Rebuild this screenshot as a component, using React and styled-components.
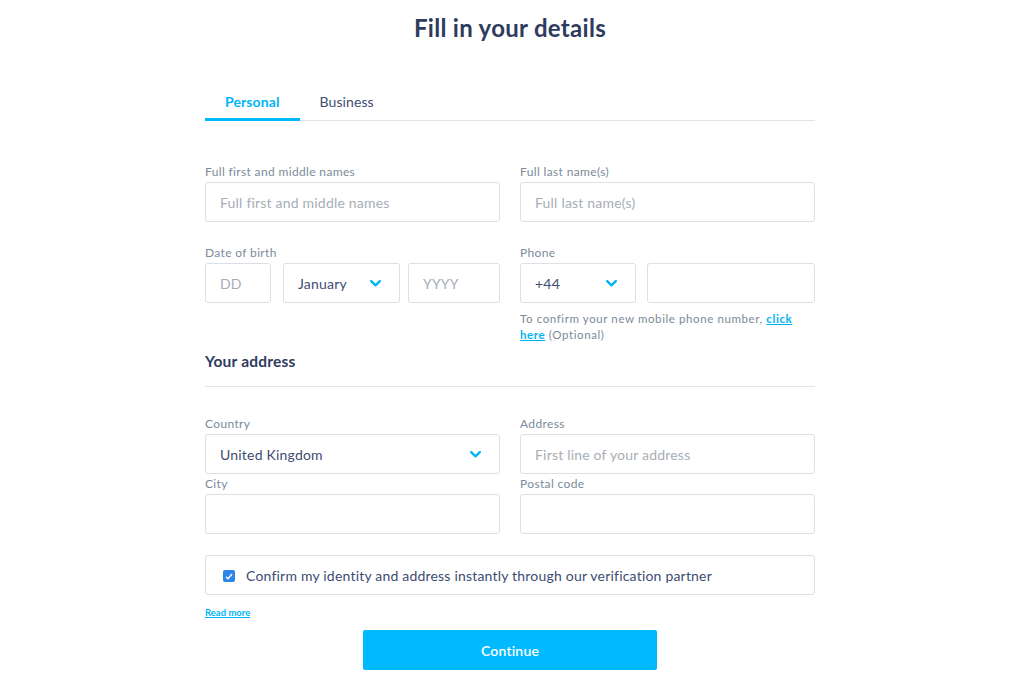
import React from 'react';
import styled, { createGlobalStyle } from 'styled-components';

const GlobalStyle = createGlobalStyle`
    body {
        margin: 0;
        background: #ffffff;
        font-family: Lato, "Open Sans", sans-serif;
        color: #2e3b5e;
    }
    * { box-sizing: border-box; }
`;

const Page = styled.div`
    padding: 14px 4px 0 0;
`;

const Content = styled.div`
    width: 610px;
    margin: 0 auto;
`;

const Title = styled.h1`
    margin: 0;
    font-size: 24px;
    line-height: 28px;
    font-weight: 700;
    letter-spacing: 0.3px;
    text-align: center;
    color: #2e3b5e;
`;

const Tabs = styled.div`
    display: flex;
    margin-top: 46px;
    border-bottom: 1px solid #e2e4e7;
`;

const Tab = styled.div`
    padding: 0 20px 2px;
    line-height: 28px;
    font-size: 14px;
    letter-spacing: 0.1px;
    font-weight: ${p => (p.$active ? 700 : 400)};
    color: ${p => (p.$active ? '#00b4f5' : '#3d4c72')};
    border-bottom: 3px solid ${p => (p.$active ? '#00b9ff' : 'transparent')};
    margin-bottom: -1px;
    cursor: pointer;
`;

const Grid = styled.div`
    display: grid;
    grid-template-columns: 1fr 1fr;
    column-gap: 20px;
    row-gap: ${p => p.$rowGap || 23}px;
    margin-top: ${p => p.$top || 0}px;
`;

const Field = styled.div`
    display: flex;
    flex-direction: column;
`;

const Label = styled.label`
    font-size: 12px;
    line-height: 15px;
    letter-spacing: 0.35px;
    color: #7b8b98;
    margin-bottom: 3px;
`;

const Box = styled.div`
    height: 40px;
    flex: ${p => (p.$grow ? '1' : 'none')};
    width: ${p => (p.$w ? `${p.$w}px` : 'auto')};
    margin-left: ${p => p.$ml || 0}px;
    border: 1px solid #dcdfe3;
    border-radius: 3px;
    display: flex;
    align-items: center;
    justify-content: space-between;
    padding: 0 18px 0 14px;
    font-size: 14px;
    letter-spacing: 0.2px;
    color: ${p => (p.$placeholder ? '#a7aeb6' : '#3d4c72')};
    background: #fff;
`;

const InlineRow = styled.div`
    display: flex;
    gap: ${p => p.$gap || 0}px;
`;

const Note = styled.p`
    margin: 8px 0 0;
    font-size: 11.5px;
    line-height: 16px;
    color: #7b8b98;
    letter-spacing: 0.6px;
`;

const Link = styled.a`
    color: #00b4f5;
    font-weight: 700;
    text-decoration: underline;
    font-size: ${p => p.$size || 11.5}px;
`;

const Section = styled.h2`
    margin: 8px 0 0;
    padding-bottom: 15px;
    font-size: 15.5px;
    line-height: 20px;
    font-weight: 700;
    letter-spacing: 0.2px;
    color: #2e3b5e;
    border-bottom: 1px solid #e2e4e7;
`;

const CheckRow = styled.div`
    margin-top: 21px;
    height: 40px;
    border: 1px solid #dcdfe3;
    border-radius: 3px;
    display: flex;
    align-items: center;
    padding-left: 17px;
    gap: 11px;
    font-size: 14px;
    letter-spacing: 0.2px;
    color: #3d4c72;
`;

const CheckBox = styled.span`
    width: 12px;
    height: 12px;
    border-radius: 2px;
    background: #2b86e8;
    display: inline-flex;
    align-items: center;
    justify-content: center;
    margin-top: 2px;
`;

const ReadMore = styled.div`
    margin-top: 9px;
    line-height: 12px;
`;

const Button = styled.button`
    display: block;
    width: 294px;
    height: 40px;
    margin: 11px auto 0;
    border: none;
    border-radius: 2px;
    background: #00b9ff;
    color: #ffffff;
    font-family: inherit;
    font-size: 14px;
    font-weight: 600;
    letter-spacing: 0.2px;
    cursor: pointer;
`;

const Chevron = () => (
    <svg width="11" height="7" viewBox="0 0 11 7">
        <polyline points="1.2,1.2 5.5,5.3 9.8,1.2" fill="none" stroke="#00b4f5" strokeWidth="2.4" strokeLinecap="round" strokeLinejoin="round" />
    </svg>
);

const Tick = () => (
    <svg width="8" height="7" viewBox="0 0 8 7">
        <polyline points="1,3.8 3,5.7 7,1" fill="none" stroke="#fff" strokeWidth="1.3" />
    </svg>
);

const App = () => {
    return (
        <Page>
            <GlobalStyle />
            <Content>
                <Title>Fill in your details</Title>
                <Tabs>
                    <Tab $active>Personal</Tab>
                    <Tab>Business</Tab>
                </Tabs>

                <Grid $top={43}>
                    <Field>
                        <Label>Full first and middle names</Label>
                        <Box $placeholder>Full first and middle names</Box>
                    </Field>
                    <Field>
                        <Label>Full last name(s)</Label>
                        <Box $placeholder>Full last name(s)</Box>
                    </Field>
                    <Field>
                        <Label>Date of birth</Label>
                        <InlineRow>
                            <Box $w={66} $placeholder>DD</Box>
                            <Box $w={117} $ml={12}>January <Chevron /></Box>
                            <Box $w={92} $ml={8} $placeholder>YYYY</Box>
                        </InlineRow>
                    </Field>
                    <Field>
                        <Label>Phone</Label>
                        <InlineRow $gap={11}>
                            <Box $w={116}>+44 <Chevron /></Box>
                            <Box $grow />
                        </InlineRow>
                        <Note>
                            To confirm your new mobile phone number, <Link href="#">click here</Link> (Optional)
                        </Note>
                    </Field>
                </Grid>

                <Section>Your address</Section>

                <Grid $top={29} $rowGap={2}>
                    <Field>
                        <Label>Country</Label>
                        <Box>United Kingdom <Chevron /></Box>
                    </Field>
                    <Field>
                        <Label>Address</Label>
                        <Box $placeholder>First line of your address</Box>
                    </Field>
                    <Field>
                        <Label>City</Label>
                        <Box />
                    </Field>
                    <Field>
                        <Label>Postal code</Label>
                        <Box />
                    </Field>
                </Grid>

                <CheckRow>
                    <CheckBox><Tick /></CheckBox>
                    Confirm my identity and address instantly through our verification partner
                </CheckRow>
                <ReadMore>
                    <Link href="#" $size={9.5}>Read more</Link>
                </ReadMore>
                <Button>Continue</Button>
            </Content>
        </Page>
    );
};

export default App;
